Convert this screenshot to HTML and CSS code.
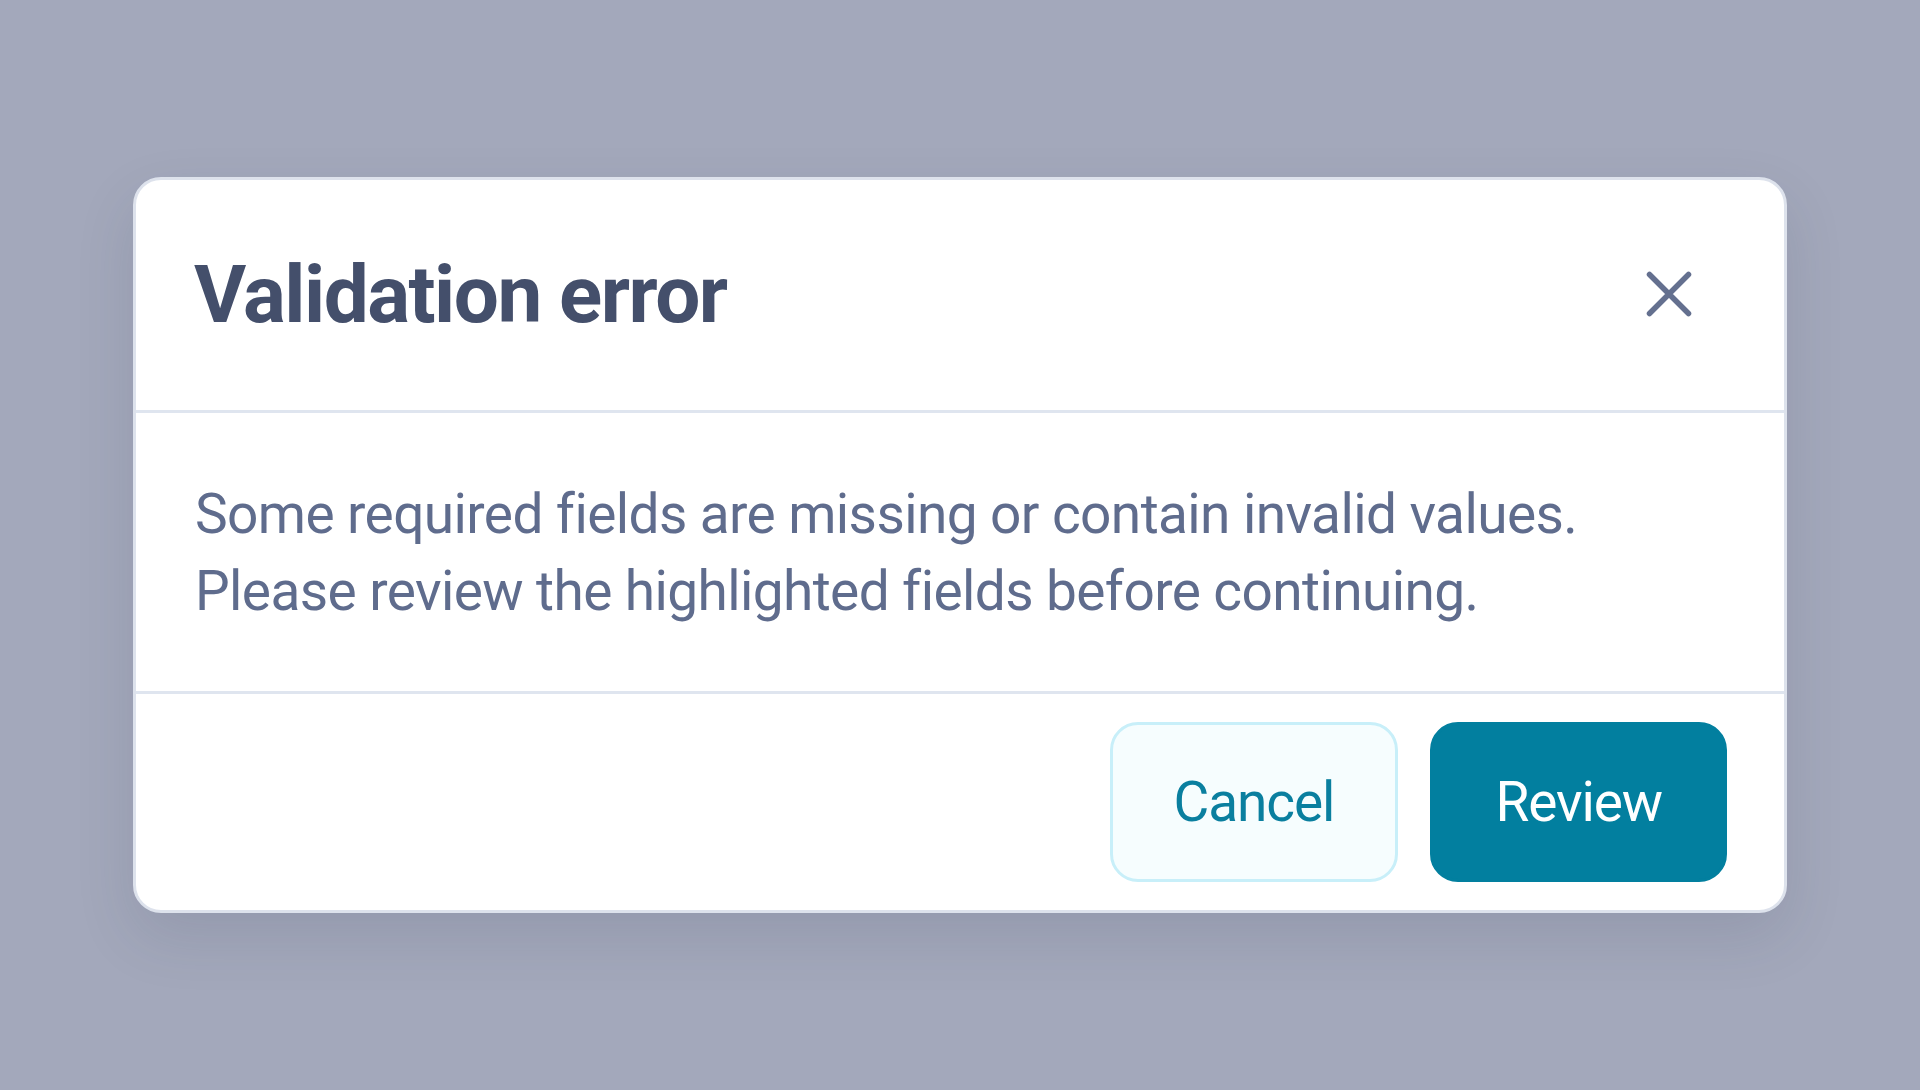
FILE: index.html
```html
<!DOCTYPE html>
<html lang="en">
<head>
  <meta charset="UTF-8" />
  <meta name="viewport" content="width=device-width, initial-scale=1.0" />
  <title>Validation error</title>
  <link rel="stylesheet" href="styles.css">
</head>
<body>
  <div class="overlay">
    <div class="dialog" role="dialog" aria-labelledby="dialogTitle">
      <div class="dialog-header">
        <h2 id="dialogTitle">Validation error</h2>
        <button class="close-btn" aria-label="Close">
          <svg width="48" height="48" viewBox="0 0 48 48">
            <path d="M4.5 4.5 L43.5 43.5 M43.5 4.5 L4.5 43.5" />
          </svg>
        </button>
      </div>
      <div class="dialog-body">
        <p>Some required fields are missing or contain invalid values.<br>
        Please review the highlighted fields before continuing.</p>
      </div>
      <div class="dialog-footer">
        <button class="btn btn-cancel">Cancel</button>
        <button class="btn btn-review">Review</button>
      </div>
    </div>
  </div>
</body>
</html>
```

FILE: styles.css
```css
body {
  font-family: Roboto, "Noto Sans", Arial, sans-serif;
  background-color: #a3a8bb;
  margin: 0;
}

.overlay {
  height: 1090px;
  display: flex;
  align-items: center;
  justify-content: center;
}

.dialog {
  width: 1654px;
  box-sizing: border-box;
  background: white;
  border: 3px solid #dde2ec;
  border-radius: 28px;
  box-shadow: 0 24px 60px rgba(40, 48, 78, 0.12);
}

.dialog-header {
  display: flex;
  align-items: center;
  justify-content: space-between;
  padding: 67px 57px 67px 58px;
  border-bottom: 3px solid #dfe5ef;
}

h2 {
  margin: 0;
  font-size: 80px;
  line-height: 96px;
  font-weight: 700;
  letter-spacing: -1.5px;
  color: #444f6b;
}

.close-btn {
  width: 66px;
  height: 66px;
  margin-right: 25px;
  padding: 0;
  border: none;
  background: none;
  display: flex;
  align-items: center;
  justify-content: center;
  cursor: pointer;
}

.close-btn svg {
  margin-top: -3px;
}

.close-btn path {
  stroke: #64708f;
  stroke-width: 5.5;
  stroke-linecap: round;
  fill: none;
}

.dialog-body {
  padding: 63px 57px 61px 59px;
  border-bottom: 3px solid #dfe5ef;
}

.dialog-body p {
  margin: 0;
  font-size: 55px;
  line-height: 77px;
  letter-spacing: -0.6px;
  color: #5f6c8d;
}

.dialog-footer {
  display: flex;
  justify-content: flex-end;
  gap: 32px;
  padding: 28px 57px;
}

.btn {
  height: 160px;
  padding: 0 61px;
  border: 3px solid transparent;
  border-radius: 28px;
  font-family: inherit;
  font-size: 55px;
  letter-spacing: -1.1px;
  cursor: pointer;
}

.btn-cancel {
  background-color: #f6fdfe;
  border-color: #c8eff9;
  color: #0a7f9f;
}

.btn-review {
  padding: 0 62px;
  background-color: #027f9f;
  border-color: #027f9f;
  color: white;
}

.btn-review:hover {
  background-color: #01708c;
}
```
